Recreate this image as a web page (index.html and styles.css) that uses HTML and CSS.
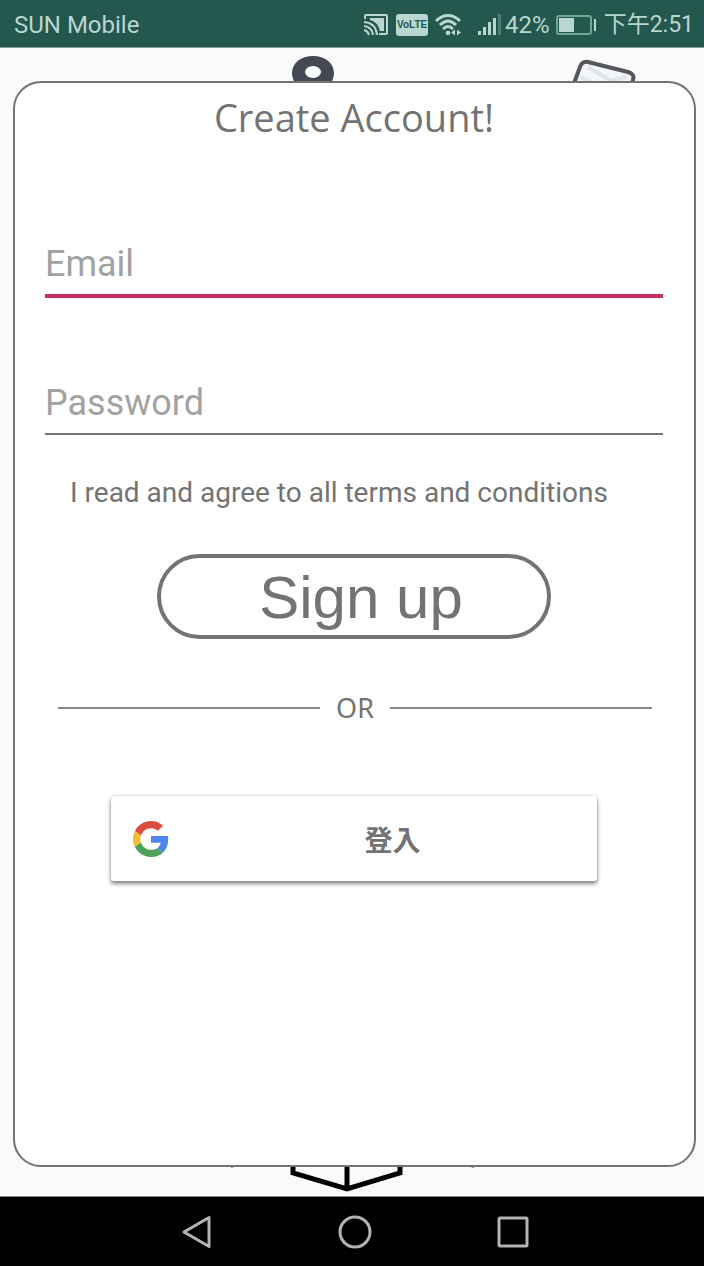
FILE: index.html
```html
<!DOCTYPE html>
<html lang="zh-Hant">
<head>
<meta charset="utf-8">
<meta name="viewport" content="width=device-width, initial-scale=1">
<title>Create Account</title>
<link rel="stylesheet" href="styles.css">
</head>
<body>
<header class="status">
  <span class="carrier">SUN Mobile</span>
  <div class="indicators">
    <svg class="cast" width="24" height="22" viewBox="0 0 24 22" fill="none" stroke="currentColor" stroke-width="2">
      <path d="M1 5V2Q1 1 2 1H22Q23 1 23 2V19Q23 20 22 20H15"/>
      <path d="M6 4H20V17H16Q14 8 6 6Z" fill="currentColor" stroke="none"/>
      <path d="M0 8Q12 9 13 21M0 12Q8 13 9 21M0 16Q4 17 5 21"/>
    </svg>
    <span class="volte">VoLTE</span>
    <svg class="wifi" width="26" height="22" viewBox="0 0 26 22" fill="none" stroke="currentColor" stroke-width="3">
      <path d="M1 7Q13-4 25 7M5 11Q13 3 21 11M8 15Q13 10 18 15"/>
      <circle cx="13" cy="19" r="2.3" fill="currentColor" stroke="none"/>
      <path d="M20 15.500V21.500L16 18.500ZM22 15.500V21.500L26 18.500Z" fill="currentColor" stroke="none"/>
    </svg>
    <svg class="signal" width="23" height="21" viewBox="0 0 23 21" fill="currentColor">
      <path d="M0 17h3v4H0zM5 13h3v8H5zM10 8h3v13h-3zM15 4h3v17h-3z"/>
      <path d="M20 0h3v21h-3z" opacity=".3"/>
    </svg>
    <span class="percent">42%</span>
    <svg class="battery" width="41" height="20" viewBox="0 0 41 20">
      <rect x="1" y="1" width="34" height="18" rx="2" fill="none" stroke="#6fa497" stroke-width="2"/>
      <path d="M3 3h15v14H3zM38 4h2v12h-2z" fill="currentColor"/>
    </svg>
    <time>下午2:51</time>
  </div>
</header>

<main class="screen">
  <svg class="art art-pin" width="44" height="60" viewBox="0 0 44 60">
    <path d="M22 1C34 1 43 8 43 18C43 30 30 38 22 56C14 38 1 30 1 18C1 8 10 1 22 1Z" fill="#444852"/>
    <ellipse cx="22" cy="17" rx="8" ry="6" fill="#fff"/>
  </svg>
  <svg class="art art-map" width="70" height="60" viewBox="0 0 70 60">
    <path d="M4 27L11 8Q13 2 19 3L59 13Q66 15 64 21L55 50L-4 48Z" fill="#f3f5f9" stroke="#55575d" stroke-width="4"/>
    <path d="M19 8L42 22L58 18M12 18L27 26M42 22L33 28" fill="none" stroke="#e0e4ec" stroke-width="4"/>
  </svg>
  <svg class="art art-box" width="246" height="60" viewBox="0 0 246 60" fill="none">
    <path d="M63 0V38L117 54L170 38V0M117 0V54" stroke="#000" stroke-width="5"/>
    <path d="M1 32L7 30M238 30L244 32" stroke="#6f6f6f" stroke-width="2"/>
  </svg>

  <form class="card">
    <h1 class="title">Create Account!</h1>
    <input class="field email" type="email" placeholder="Email" aria-label="Email">
    <input class="field password" type="password" placeholder="Password" aria-label="Password">
    <p class="terms">I read and agree to all terms and conditions</p>
    <button class="signup" type="button">Sign up</button>
    <div class="divider">OR</div>
    <button class="google" type="button">
      <svg width="36" height="36" viewBox="0 0 48 48">
        <path fill="#db4f43" d="M24 9.5c3.54 0 6.71 1.22 9.21 3.6l6.85-6.85C35.9 2.38 30.47 0 24 0 14.62 0 6.51 5.38 2.56 13.22l7.98 6.19C12.43 13.72 17.74 9.5 24 9.5z"/>
        <path fill="#4f86ec" d="M46.98 24.55c0-1.57-.15-3.09-.38-4.55H24v9.02h12.94c-.58 2.96-2.26 5.48-4.78 7.18l7.73 6c4.51-4.18 7.09-10.36 7.09-17.65z"/>
        <path fill="#f3ba3a" d="M10.53 28.59c-.48-1.45-.76-2.99-.76-4.59s.27-3.14.76-4.59l-7.98-6.19C.92 16.46 0 20.12 0 24c0 3.88.92 7.54 2.56 10.78l7.97-6.19z"/>
        <path fill="#4ca157" d="M24 48c6.48 0 11.93-2.13 15.89-5.81l-7.73-6c-2.15 1.45-4.92 2.3-8.16 2.3-6.26 0-11.57-4.22-13.47-9.91l-7.98 6.19C6.51 42.62 14.62 48 24 48z"/>
      </svg>
      <span class="google-label">登入</span>
    </button>
  </form>
</main>

<nav class="navbar">
  <button type="button" aria-label="Back">
    <svg width="34" height="34" viewBox="0 0 34 34"><path d="M4 17L29 2.5V31.5Z"/></svg>
  </button>
  <button type="button" aria-label="Home">
    <svg width="34" height="34" viewBox="0 0 34 34"><circle cx="17" cy="17" r="15"/></svg>
  </button>
  <button type="button" aria-label="Recent apps">
    <svg width="34" height="34" viewBox="0 0 34 34"><rect x="3" y="3" width="28" height="28" rx="1"/></svg>
  </button>
</nav>
</body>
</html>
```
FILE: styles.css
```css
* {
  box-sizing: border-box;
}

body {
  margin: 0;
  min-height: 100vh;
  display: flex;
  flex-direction: column;
  background: #fafafa;
  color: #737373;
  font-family: Roboto, "Noto Sans CJK TC", sans-serif;
}

button {
  padding: 0;
  border: 0;
  background: none;
  color: inherit;
  font: inherit;
}

.status {
  display: flex;
  align-items: center;
  justify-content: space-between;
  height: 48px;
  padding: 2px 10px 0 14px;
  border-bottom: 1px solid #7d9f98;
  background: #24574e;
  color: #b9d6d0;
  font-size: 24px;
  line-height: 32px;
}

.indicators {
  display: flex;
  align-items: center;
}

.indicators time {
  font-size: 23px;
}

.volte {
  width: 32px;
  margin: 0 7px 0 8px;
  border-radius: 3px;
  background: #b9d6d0;
  color: #24574e;
  font: bold 10px/22px "Liberation Sans Narrow", "Liberation Sans", sans-serif;
  text-align: center;
}

.signal {
  margin: 0 4px 0 17px;
}

.battery {
  margin: 0 7px 0 6px;
}

.screen {
  position: relative;
  flex: 1;
  display: flex;
  padding: 33px 8px 29px 13px;
}

.art {
  position: absolute;
}

.art-pin {
  top: 7px;
  left: 291px;
}

.art-map {
  top: 11px;
  left: 569px;
}

.art-box {
  bottom: 1px;
  left: 230px;
}

.card {
  position: relative;
  flex: 1;
  display: flex;
  flex-direction: column;
  padding: 8px 31px 40px 30px;
  border: 2px solid #737373;
  border-radius: 28px;
  background: #fff;
}

.title {
  margin: 0;
  font: 400 38px/52px "Open Sans", "Noto Sans", sans-serif;
  text-align: center;
}

.field {
  width: 100%;
  padding: 0 0 6px;
  border: 0;
  border-radius: 0;
  outline: 0;
  background: none;
  color: #444;
  font: 36px/48px Roboto, sans-serif;
}

.field::placeholder {
  color: #a2a2a2;
  opacity: 1;
}

.email {
  height: 58px;
  margin-top: 97px;
  border-bottom: 4px solid #c2315f;
}

.password {
  height: 56px;
  margin-top: 81px;
  border-bottom: 2px solid #737373;
}

.terms {
  margin: 40px 0 0 25px;
  font-size: 28px;
  line-height: 36px;
}

.signup {
  align-self: center;
  width: 394px;
  max-width: 100%;
  height: 85px;
  margin-top: 43px;
  padding: 2px 0 0 14px;
  border: 4px solid #737373;
  border-radius: 43px;
  font: 60px/72px "Liberation Sans", Arial, sans-serif;
}

.divider {
  display: flex;
  align-items: center;
  gap: 16px;
  margin: 51px 11px 0 13px;
  font: 27px/36px "Noto Sans", "Open Sans", sans-serif;
}

.divider::before,
.divider::after {
  content: "";
  flex: 1;
  height: 2px;
  background: #8a8a8a;
}

.google {
  align-self: center;
  display: flex;
  align-items: center;
  gap: 19px;
  width: 486px;
  max-width: 100%;
  height: 85px;
  margin-top: 70px;
  padding-left: 22px;
  border-radius: 3px;
  background: #fff;
  box-shadow: 0 3px 4px rgba(0, 0, 0, 0.45), 0 0 3px rgba(0, 0, 0, 0.2);
}

.google-label {
  flex: 1;
  font: bold 28px/40px "Noto Sans CJK TC", sans-serif;
  text-align: center;
}

.navbar {
  display: flex;
  align-items: center;
  justify-content: center;
  gap: 124px;
  height: 70px;
  padding-left: 6px;
  border-top: 1px solid #8a8a8a;
  background: #000;
}

.navbar button {
  display: flex;
}

.navbar svg {
  fill: none;
  stroke: #b3b3b3;
  stroke-width: 3;
  stroke-linejoin: round;
}
```
